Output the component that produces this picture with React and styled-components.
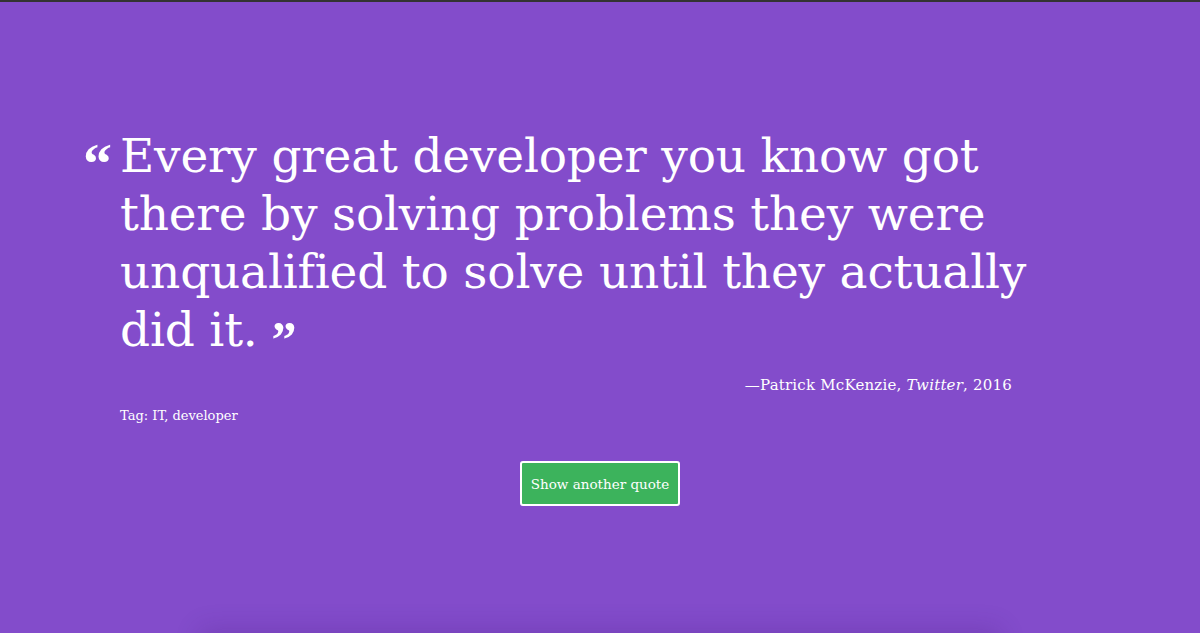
import React from "react";
import styled, { createGlobalStyle } from "styled-components";

const Global = createGlobalStyle`
  html, body {
    margin: 0;
    padding: 0;
    background: #834ccb;
  }
  body {
    font-family: "DejaVu Serif", "Liberation Serif", serif;
    color: #fff;
  }
`;

const Page = styled.div`
  min-height: 633px;
  box-sizing: border-box;
  border-top: 2px solid #333;
  background: #834ccb;
  position: relative;
  overflow: hidden;
`;

const Main = styled.main`
  padding: 125px 0 0 83px;
`;

const Quote = styled.blockquote`
  margin: 0;
  display: flex;
  align-items: flex-start;
`;

const OpenMark = styled.span`
  width: 37px;
  flex: none;
  font-family: "Liberation Serif", serif;
  font-size: 58px;
  font-weight: bold;
  line-height: 1;
  margin-top: 8px;
`;

const Text = styled.p`
  margin: 0;
  width: 930px;
  font-size: 47px;
  line-height: 58px;
  letter-spacing: -0.2px;
`;

const CloseMark = styled.span`
  display: inline-block;
  font-family: "Liberation Serif", serif;
  font-size: 50px;
  font-weight: bold;
  line-height: 30px;
  height: 30px;
  margin-left: 14px;
  vertical-align: -10px;
`;

const Cite = styled.p`
  margin: 17px 0 0 37px;
  width: 892px;
  text-align: right;
  font-size: 15px;
  letter-spacing: 0.2px;
  i {
    font-style: italic;
  }
`;

const Tag = styled.p`
  margin: 14px 0 0 37px;
  font-size: 13px;
`;

const Actions = styled.div`
  display: flex;
  justify-content: center;
  margin-top: 38px;
`;

const Button = styled.button`
  width: 160px;
  height: 45px;
  background: #3cb35c;
  color: #fff;
  border: 2px solid #fff;
  border-radius: 3px;
  font-family: "DejaVu Serif", "Liberation Serif", serif;
  font-size: 13.5px;
  cursor: pointer;
`;

const Shade = styled.div`
  position: absolute;
  left: 200px;
  right: 200px;
  bottom: -40px;
  height: 40px;
  box-shadow: 0 -4px 26px rgba(60, 20, 110, 0.2);
`;

export default function App() {
  return (
    <Page>
      <Global />
      <Main>
        <Quote>
          <OpenMark>“</OpenMark>
          <Text>
            Every great developer you know got there by solving problems they
            were unqualified to solve until they actually did it.
            <CloseMark>”</CloseMark>
          </Text>
        </Quote>
        <Cite>
          —Patrick McKenzie, <i>Twitter</i>, 2016
        </Cite>
        <Tag>Tag: IT, developer</Tag>
      </Main>
      <Actions>
        <Button>Show another quote</Button>
      </Actions>
      <Shade />
    </Page>
  );
}
